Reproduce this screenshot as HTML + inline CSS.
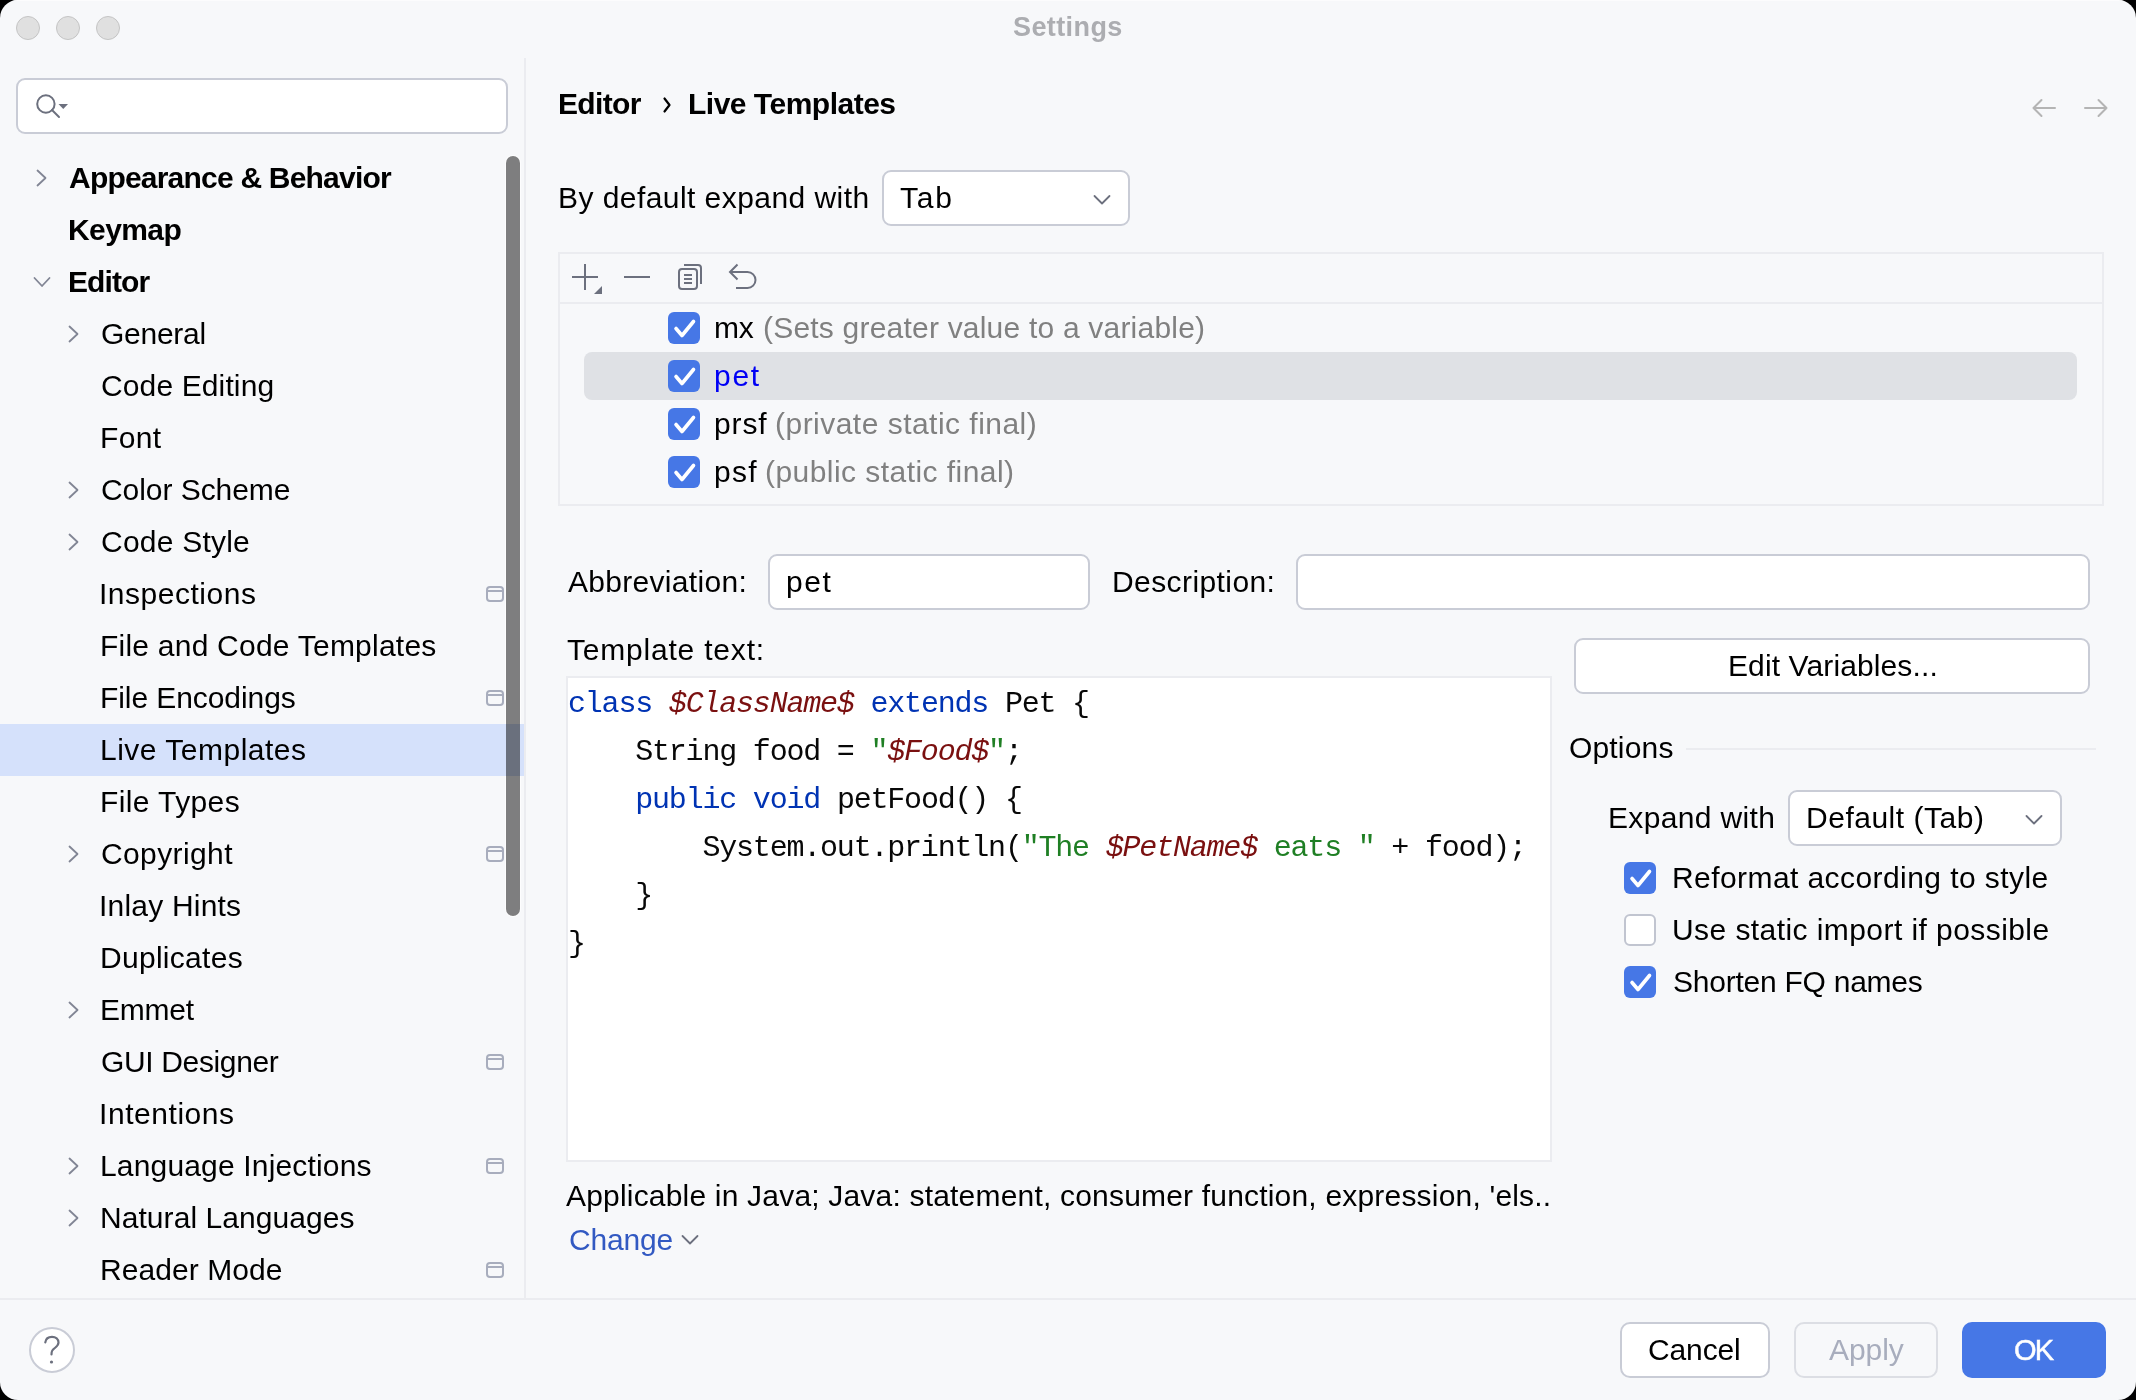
<!DOCTYPE html>
<html><head><meta charset="utf-8"><title>Settings</title><style>
html,body{margin:0;padding:0}
body{width:2136px;height:1400px;background:#000;position:relative;overflow:hidden;font-family:"Liberation Sans",sans-serif}
#win{position:absolute;left:0;top:0;width:2136px;height:1400px;border-radius:18px;background:#f7f8fa;overflow:hidden}
.a{position:absolute;box-sizing:border-box}
.t{position:absolute;white-space:pre;line-height:1;will-change:transform}
.tl{position:absolute;width:24px;height:24px;border-radius:50%;background:#e0e0e0;box-sizing:border-box;border:1px solid #c4c4c4;top:16px}
.fld{position:absolute;box-sizing:border-box;background:#fff;border:2px solid #c9ccd6;border-radius:9px}
.cbx{position:absolute;width:32px;height:32px;border-radius:6px;background:#4677e6}
.cbx svg{position:absolute;left:0;top:0}
.wicon{position:absolute;left:486px;width:18px;height:16px;box-sizing:border-box;border:2px solid #a8adbd;border-radius:4px}
.wicon:after{content:"";position:absolute;left:0;right:0;top:2px;height:2px;background:#a8adbd}
.code{will-change:transform;position:absolute;left:567.5px;white-space:pre;font-family:"Liberation Mono",monospace;font-size:30px;letter-spacing:-1.2px;line-height:48px;color:#080808}
.kw{color:#0033b3}.var{color:#7a1010;font-style:italic}.str{color:#1f7f24}

</style></head><body>
<div id="win">
<div class="tl" style="left:16px"></div>
<div class="tl" style="left:56px"></div>
<div class="tl" style="left:96px"></div>
<div class="a" style="left:524px;top:58px;width:2px;height:1240px;background:#ebecf0"></div>
<div class="a" style="left:0;top:1298px;width:2136px;height:2px;background:#ebecf0"></div>
<div class="fld" style="left:16px;top:78px;width:492px;height:56px"></div>
<svg class="a" style="left:30px;top:88px" width="44" height="36" viewBox="30 88 44 36"><circle cx="45.9" cy="104" r="8.7" fill="none" stroke="#6c707e" stroke-width="2"/><line x1="52" y1="110" x2="59" y2="117" stroke="#6c707e" stroke-width="2" stroke-linecap="round"/><path d="M58.5 104 L68 104 L63.25 109 Z" fill="#6c707e"/></svg>
<div class="a" style="left:505px;top:155px;width:16px;height:762px;border-radius:8px;background:rgba(255,255,255,0.75)"></div>
<div class="a" style="left:0;top:724px;width:524px;height:52px;background:#d5e1fb"></div>
<svg class="a" style="left:0;top:0" width="524" height="1298" viewBox="0 0 524 1298"><path d="M37.5 170.5 L45.5 178.0 L37.5 185.5" fill="none" stroke="#818594" stroke-width="1.8" stroke-linecap="round" stroke-linejoin="round"/><path d="M69.5 326.5 L77.5 334.0 L69.5 341.5" fill="none" stroke="#818594" stroke-width="1.8" stroke-linecap="round" stroke-linejoin="round"/><path d="M69.5 482.5 L77.5 490.0 L69.5 497.5" fill="none" stroke="#818594" stroke-width="1.8" stroke-linecap="round" stroke-linejoin="round"/><path d="M69.5 534.5 L77.5 542.0 L69.5 549.5" fill="none" stroke="#818594" stroke-width="1.8" stroke-linecap="round" stroke-linejoin="round"/><path d="M69.5 846.5 L77.5 854.0 L69.5 861.5" fill="none" stroke="#818594" stroke-width="1.8" stroke-linecap="round" stroke-linejoin="round"/><path d="M69.5 1002.5 L77.5 1010.0 L69.5 1017.5" fill="none" stroke="#818594" stroke-width="1.8" stroke-linecap="round" stroke-linejoin="round"/><path d="M69.5 1158.5 L77.5 1166.0 L69.5 1173.5" fill="none" stroke="#818594" stroke-width="1.8" stroke-linecap="round" stroke-linejoin="round"/><path d="M69.5 1210.5 L77.5 1218.0 L69.5 1225.5" fill="none" stroke="#818594" stroke-width="1.8" stroke-linecap="round" stroke-linejoin="round"/><path d="M34.5 278.0 L42 286.0 L49.5 278.0" fill="none" stroke="#818594" stroke-width="1.8" stroke-linecap="round" stroke-linejoin="round"/></svg>
<div class="wicon" style="top:586px"></div>
<div class="wicon" style="top:690px"></div>
<div class="wicon" style="top:846px"></div>
<div class="wicon" style="top:1054px"></div>
<div class="wicon" style="top:1158px"></div>
<div class="wicon" style="top:1262px"></div>
<div class="a" style="left:506px;top:156px;width:14px;height:760px;border-radius:7px;background:rgba(0,0,0,0.5)"></div>
<div class="a" style="left:29px;top:1327px;width:46px;height:46px;border-radius:50%;background:#fff;border:2px solid #c9ccd6"></div>
<svg class="a" style="left:29px;top:1327px" width="46" height="46" viewBox="29 1327 46 46"><path d="M45.3 1342.3 C45.8 1338.8 48.5 1336.8 52 1336.8 C55.7 1336.8 58.5 1339.2 58.5 1342.6 C58.5 1346.6 54.3 1347.5 52.3 1350.5 C51.6 1351.6 51.5 1352.5 51.5 1354.5" fill="none" stroke="#6c707e" stroke-width="2.2" stroke-linecap="round"/><circle cx="51.5" cy="1362" r="1.6" fill="#6c707e"/></svg>
<svg class="a" style="left:2020px;top:90px" width="100" height="36" viewBox="2020 90 100 36"><path d="M2055 108 H2033.5 M2041.5 100 L2033.5 108 L2041.5 116" fill="none" stroke="#b4b4b4" stroke-width="2" stroke-linecap="round" stroke-linejoin="round"/><path d="M2085 108 H2106.5 M2098.5 100 L2106.5 108 L2098.5 116" fill="none" stroke="#b4b4b4" stroke-width="2" stroke-linecap="round" stroke-linejoin="round"/></svg>
<svg class="a" style="left:655px;top:90px" width="24" height="30" viewBox="655 90 24 30"><path d="M664.5 98.5 L669.5 105 L664.5 111.5" fill="none" stroke="#000" stroke-width="2.2" stroke-linecap="round" stroke-linejoin="round"/></svg>
<div class="fld" style="left:882px;top:170px;width:248px;height:56px;border-radius:9px"></div>
<svg class="a" style="left:1085px;top:185px" width="34" height="30" viewBox="1085 185 34 30"><path d="M1094.5 196 L1102 203.5 L1109.5 196" fill="none" stroke="#6c707e" stroke-width="1.8" stroke-linecap="round" stroke-linejoin="round"/></svg>
<div class="a" style="left:558px;top:252px;width:1546px;height:254px;border:2px solid #ebecf0"></div>
<div class="a" style="left:560px;top:302px;width:1542px;height:2px;background:#ebecf0"></div>
<svg class="a" style="left:560px;top:254px" width="200" height="48" viewBox="560 254 200 48"><path d="M572 277 H598 M585 264 V290" fill="none" stroke="#6c707e" stroke-width="2"/><path d="M602 286 V294 H594 Z" fill="#6c707e"/><path d="M624 277 H650" fill="none" stroke="#6c707e" stroke-width="2"/><rect x="679" y="269" width="18" height="20" rx="3" fill="none" stroke="#6c707e" stroke-width="2"/><path d="M684 265 H698 Q701 265 701 268 V284" fill="none" stroke="#6c707e" stroke-width="2"/><path d="M684 275 H692 M684 279 H692 M684 283 H692" fill="none" stroke="#6c707e" stroke-width="1.8"/><path d="M737.5 264.5 L730 272 L737.5 279.5 M730 272 H747.5 A8 8 0 0 1 747.5 288 H736" fill="none" stroke="#6c707e" stroke-width="2" stroke-linejoin="miter"/></svg>
<div class="a" style="left:584px;top:352px;width:1493px;height:48px;border-radius:8px;background:#dfe1e5"></div>
<div class="cbx" style="left:668px;top:312px"><svg width="32" height="32" viewBox="0 0 32 32"><path d="M8 16.5 L14 23.5 L25.5 9.5" fill="none" stroke="#fff" stroke-width="3.6" stroke-linecap="round" stroke-linejoin="round"/></svg></div>
<div class="cbx" style="left:668px;top:360px"><svg width="32" height="32" viewBox="0 0 32 32"><path d="M8 16.5 L14 23.5 L25.5 9.5" fill="none" stroke="#fff" stroke-width="3.6" stroke-linecap="round" stroke-linejoin="round"/></svg></div>
<div class="cbx" style="left:668px;top:408px"><svg width="32" height="32" viewBox="0 0 32 32"><path d="M8 16.5 L14 23.5 L25.5 9.5" fill="none" stroke="#fff" stroke-width="3.6" stroke-linecap="round" stroke-linejoin="round"/></svg></div>
<div class="cbx" style="left:668px;top:456px"><svg width="32" height="32" viewBox="0 0 32 32"><path d="M8 16.5 L14 23.5 L25.5 9.5" fill="none" stroke="#fff" stroke-width="3.6" stroke-linecap="round" stroke-linejoin="round"/></svg></div>
<div class="fld" style="left:768px;top:554px;width:322px;height:56px"></div>
<div class="fld" style="left:1296px;top:554px;width:794px;height:56px"></div>
<div class="a" style="left:566px;top:676px;width:986px;height:486px;background:#fff;border:2px solid #ebecf0"></div>
<div class="code" style="top:680px"><span class="kw">class</span> <span class="var">$ClassName$</span> <span class="kw">extends</span> Pet {
    String food = <span class="str">"</span><span class="var">$Food$</span><span class="str">"</span>;
    <span class="kw">public</span> <span class="kw">void</span> petFood() {
        System.out.println(<span class="str">"The </span><span class="var">$PetName$</span><span class="str"> eats "</span> + food);
    }
}</div>
<div class="fld" style="left:1574px;top:638px;width:516px;height:56px"></div>
<div class="a" style="left:1686px;top:748px;width:410px;height:2px;background:#ebecf0"></div>
<div class="fld" style="left:1788px;top:790px;width:274px;height:56px"></div>
<svg class="a" style="left:2015px;top:805px" width="34" height="30" viewBox="2015 805 34 30"><path d="M2026.5 816 L2034 823.5 L2041.5 816" fill="none" stroke="#6c707e" stroke-width="1.8" stroke-linecap="round" stroke-linejoin="round"/></svg>
<div class="cbx" style="left:1624px;top:862px"><svg width="32" height="32" viewBox="0 0 32 32"><path d="M8 16.5 L14 23.5 L25.5 9.5" fill="none" stroke="#fff" stroke-width="3.6" stroke-linecap="round" stroke-linejoin="round"/></svg></div>
<div class="a" style="left:1624px;top:914px;width:32px;height:32px;border-radius:6px;background:#fff;border:2px solid #c1c5d0"></div>
<div class="cbx" style="left:1624px;top:966px"><svg width="32" height="32" viewBox="0 0 32 32"><path d="M8 16.5 L14 23.5 L25.5 9.5" fill="none" stroke="#fff" stroke-width="3.6" stroke-linecap="round" stroke-linejoin="round"/></svg></div>
<svg class="a" style="left:675px;top:1228px" width="30" height="24" viewBox="675 1228 30 24"><path d="M682.5 1236 L690 1243.5 L697.5 1236" fill="none" stroke="#6c707e" stroke-width="1.8" stroke-linecap="round" stroke-linejoin="round"/></svg>
<div class="fld" style="left:1620px;top:1322px;width:150px;height:56px;border-radius:10px"></div>
<div class="a" style="left:1794px;top:1322px;width:144px;height:56px;border-radius:10px;border:2px solid #dcdee4"></div>
<div class="a" style="left:1962px;top:1322px;width:144px;height:56px;border-radius:10px;background:#4677e6"></div><div class="a" style="left:0;top:0;width:2136px;height:1px;background:#fcfcfd"></div>

<div class="t" id="title" style="left:1012.50px;top:14.00px;font-size:27.00px;letter-spacing:0.398px;font-weight:700;color:#acadb1;">Settings</div>
<div class="t" id="s0" style="left:68.50px;top:163.01px;font-size:30.00px;letter-spacing:-0.790px;font-weight:700;color:#000000;">Appearance &amp; Behavior</div>
<div class="t" id="s1" style="left:67.50px;top:215.01px;font-size:30.00px;letter-spacing:-0.600px;font-weight:700;color:#000000;">Keymap</div>
<div class="t" id="s2" style="left:67.50px;top:267.01px;font-size:30.00px;letter-spacing:-0.920px;font-weight:700;color:#000000;">Editor</div>
<div class="t" id="s3" style="left:100.50px;top:319.01px;font-size:30.00px;letter-spacing:-0.261px;font-weight:400;color:#000000;">General</div>
<div class="t" id="s4" style="left:100.50px;top:371.01px;font-size:30.00px;letter-spacing:0.125px;font-weight:400;color:#000000;">Code Editing</div>
<div class="t" id="s5" style="left:99.50px;top:423.01px;font-size:30.00px;letter-spacing:0.333px;font-weight:400;color:#000000;">Font</div>
<div class="t" id="s6" style="left:100.50px;top:475.01px;font-size:30.00px;letter-spacing:-0.057px;font-weight:400;color:#000000;">Color Scheme</div>
<div class="t" id="s7" style="left:100.50px;top:527.01px;font-size:30.00px;letter-spacing:0.222px;font-weight:400;color:#000000;">Code Style</div>
<div class="t" id="s8" style="left:98.50px;top:579.01px;font-size:30.00px;letter-spacing:0.520px;font-weight:400;color:#000000;">Inspections</div>
<div class="t" id="s9" style="left:99.50px;top:631.01px;font-size:30.00px;letter-spacing:0.227px;font-weight:400;color:#000000;">File and Code Templates</div>
<div class="t" id="s10" style="left:99.50px;top:683.01px;font-size:30.00px;letter-spacing:-0.077px;font-weight:400;color:#000000;">File Encodings</div>
<div class="t" id="s11" style="left:99.50px;top:735.01px;font-size:30.00px;letter-spacing:0.498px;font-weight:400;color:#000000;">Live Templates</div>
<div class="t" id="s12" style="left:99.50px;top:787.01px;font-size:30.00px;letter-spacing:0.392px;font-weight:400;color:#000000;">File Types</div>
<div class="t" id="s13" style="left:100.50px;top:839.01px;font-size:30.00px;letter-spacing:0.387px;font-weight:400;color:#000000;">Copyright</div>
<div class="t" id="s14" style="left:98.50px;top:891.01px;font-size:30.00px;letter-spacing:0.200px;font-weight:400;color:#000000;">Inlay Hints</div>
<div class="t" id="s15" style="left:99.50px;top:943.01px;font-size:30.00px;letter-spacing:0.291px;font-weight:400;color:#000000;">Duplicates</div>
<div class="t" id="s16" style="left:99.50px;top:995.01px;font-size:30.00px;letter-spacing:-0.250px;font-weight:400;color:#000000;">Emmet</div>
<div class="t" id="s17" style="left:100.50px;top:1047.01px;font-size:30.00px;letter-spacing:-0.352px;font-weight:400;color:#000000;">GUI Designer</div>
<div class="t" id="s18" style="left:98.50px;top:1099.01px;font-size:30.00px;letter-spacing:0.557px;font-weight:400;color:#000000;">Intentions</div>
<div class="t" id="s19" style="left:99.50px;top:1151.01px;font-size:30.00px;letter-spacing:0.167px;font-weight:400;color:#000000;">Language Injections</div>
<div class="t" id="s20" style="left:99.50px;top:1203.01px;font-size:30.00px;letter-spacing:0.060px;font-weight:400;color:#000000;">Natural Languages</div>
<div class="t" id="s21" style="left:99.50px;top:1255.01px;font-size:30.00px;letter-spacing:0.060px;font-weight:400;color:#000000;">Reader Mode</div>
<div class="t" id="bc1" style="left:558.00px;top:89.01px;font-size:30.00px;letter-spacing:-0.640px;font-weight:700;color:#000000;">Editor</div>
<div class="t" id="bc2" style="left:688.00px;top:89.01px;font-size:30.00px;letter-spacing:-0.501px;font-weight:700;color:#000000;">Live Templates</div>
<div class="t" id="expl" style="left:557.70px;top:183.01px;font-size:30.00px;letter-spacing:0.440px;font-weight:400;color:#000000;">By default expand with</div>
<div class="t" id="tab" style="left:900.00px;top:183.01px;font-size:30.00px;letter-spacing:1.800px;font-weight:400;color:#000000;">Tab</div>
<div class="t" id="mx" style="left:713.50px;top:313.01px;font-size:30.00px;letter-spacing:-0.200px;font-weight:400;color:#000000;">mx</div>
<div class="t" id="mxd" style="left:762.50px;top:313.01px;font-size:30.00px;letter-spacing:0.206px;font-weight:400;color:#808080;">(Sets greater value to a variable)</div>
<div class="t" id="pet" style="left:713.50px;top:361.01px;font-size:30.00px;letter-spacing:1.700px;font-weight:400;color:#0000f5;">pet</div>
<div class="t" id="prsf" style="left:713.50px;top:409.01px;font-size:30.00px;letter-spacing:0.873px;font-weight:400;color:#000000;">prsf</div>
<div class="t" id="prsfd" style="left:775.00px;top:409.01px;font-size:30.00px;letter-spacing:0.476px;font-weight:400;color:#808080;">(private static final)</div>
<div class="t" id="psf" style="left:713.50px;top:457.01px;font-size:30.00px;letter-spacing:1.300px;font-weight:400;color:#000000;">psf</div>
<div class="t" id="psfd" style="left:765.00px;top:457.01px;font-size:30.00px;letter-spacing:0.450px;font-weight:400;color:#808080;">(public static final)</div>
<div class="t" id="abl" style="left:567.50px;top:567.01px;font-size:30.00px;letter-spacing:0.301px;font-weight:400;color:#000000;">Abbreviation:</div>
<div class="t" id="abv" style="left:785.50px;top:567.01px;font-size:30.00px;letter-spacing:1.600px;font-weight:400;color:#000000;">pet</div>
<div class="t" id="desl" style="left:1112.00px;top:567.01px;font-size:30.00px;letter-spacing:0.415px;font-weight:400;color:#000000;">Description:</div>
<div class="t" id="ttl" style="left:566.50px;top:634.51px;font-size:30.00px;letter-spacing:0.796px;font-weight:400;color:#000000;">Template text:</div>
<div class="t" id="editv" style="left:1727.80px;top:651.01px;font-size:30.00px;letter-spacing:0.115px;font-weight:400;color:#000000;">Edit Variables...</div>
<div class="t" id="opt" style="left:1568.50px;top:733.01px;font-size:30.00px;letter-spacing:0.167px;font-weight:400;color:#000000;">Options</div>
<div class="t" id="expw" style="left:1607.50px;top:803.01px;font-size:30.00px;letter-spacing:0.340px;font-weight:400;color:#000000;">Expand with</div>
<div class="t" id="deft" style="left:1806.00px;top:803.01px;font-size:30.00px;letter-spacing:0.513px;font-weight:400;color:#000000;">Default (Tab)</div>
<div class="t" id="cb1" style="left:1671.50px;top:863.01px;font-size:30.00px;letter-spacing:0.423px;font-weight:400;color:#000000;">Reformat according to style</div>
<div class="t" id="cb2" style="left:1671.50px;top:915.01px;font-size:30.00px;letter-spacing:0.428px;font-weight:400;color:#000000;">Use static import if possible</div>
<div class="t" id="cb3" style="left:1672.50px;top:966.60px;font-size:30.00px;letter-spacing:-0.243px;font-weight:400;color:#000000;">Shorten FQ names</div>
<div class="t" id="appl" style="left:566.10px;top:1181.01px;font-size:30.00px;letter-spacing:0.191px;font-weight:400;color:#000000;">Applicable in Java; Java: statement, consumer function, expression, &#x27;els..</div>
<div class="t" id="chg" style="left:568.50px;top:1225.01px;font-size:30.00px;letter-spacing:-0.160px;font-weight:400;color:#3259c2;">Change</div>
<div class="t" id="cancel" style="left:1648.00px;top:1335.01px;font-size:30.00px;letter-spacing:-0.120px;font-weight:400;color:#000000;">Cancel</div>
<div class="t" id="apply" style="left:1828.50px;top:1335.01px;font-size:30.00px;letter-spacing:-0.050px;font-weight:400;color:#a8adbd;">Apply</div>
<div class="t" id="ok" style="left:2013.50px;top:1336.01px;font-size:29.00px;letter-spacing:-1.800px;font-weight:400;color:#ffffff;-webkit-text-stroke:0.5px currentColor">OK</div>
</div>
</body></html>
